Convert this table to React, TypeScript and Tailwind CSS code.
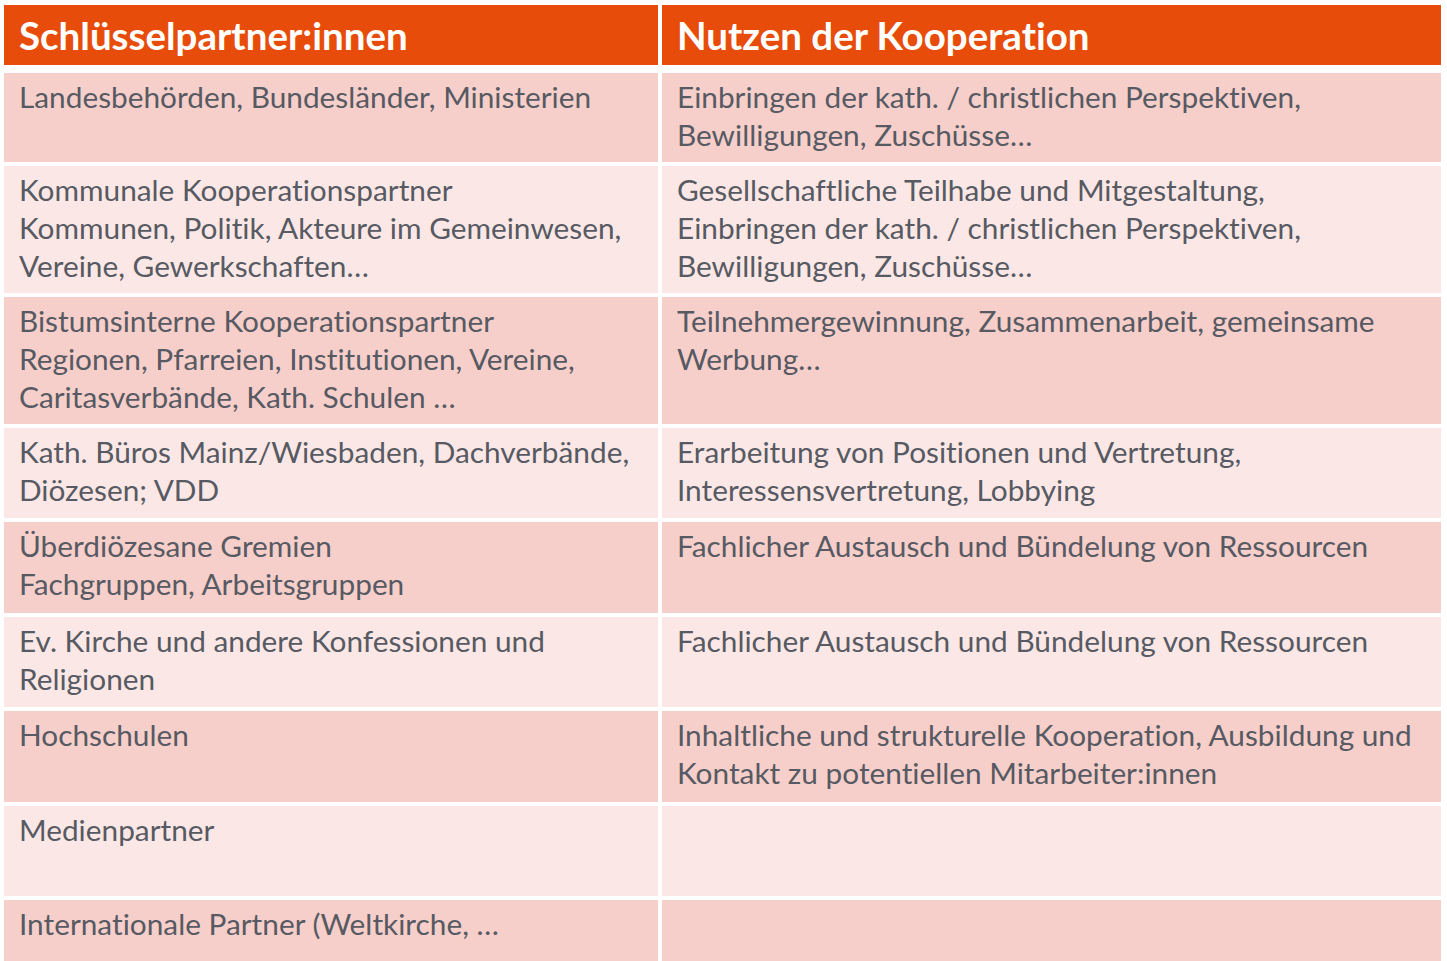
const rows: { h: string; bg: string; left: string[]; right: string[] }[] = [
  {
    h: 'h-[89px]',
    bg: 'bg-[#f6cfcb]',
    left: ['Landesbehörden, Bundesländer, Ministerien'],
    right: ['Einbringen der kath. / christlichen Perspektiven,', 'Bewilligungen, Zuschüsse…'],
  },
  {
    h: 'h-[127px]',
    bg: 'bg-[#fbe8e6]',
    left: ['Kommunale Kooperationspartner', 'Kommunen, Politik, Akteure im Gemeinwesen,', 'Vereine, Gewerkschaften…'],
    right: [
      'Gesellschaftliche Teilhabe und Mitgestaltung,',
      'Einbringen der kath. / christlichen Perspektiven,',
      'Bewilligungen, Zuschüsse…',
    ],
  },
  {
    h: 'h-[127px]',
    bg: 'bg-[#f6cfcb]',
    left: ['Bistumsinterne Kooperationspartner', 'Regionen, Pfarreien, Institutionen, Vereine,', 'Caritasverbände, Kath. Schulen …'],
    right: ['Teilnehmergewinnung, Zusammenarbeit, gemeinsame', 'Werbung…'],
  },
  {
    h: 'h-[90px]',
    bg: 'bg-[#fbe8e6]',
    left: ['Kath. Büros Mainz/Wiesbaden, Dachverbände,', 'Diözesen; VDD'],
    right: ['Erarbeitung von Positionen und Vertretung,', 'Interessensvertretung, Lobbying'],
  },
  {
    h: 'h-[91px]',
    bg: 'bg-[#f6cfcb]',
    left: ['Überdiözesane Gremien', 'Fachgruppen, Arbeitsgruppen'],
    right: ['Fachlicher Austausch und Bündelung von Ressourcen'],
  },
  {
    h: 'h-[90px]',
    bg: 'bg-[#fbe8e6]',
    left: ['Ev. Kirche und andere Konfessionen und', 'Religionen'],
    right: ['Fachlicher Austausch und Bündelung von Ressourcen'],
  },
  {
    h: 'h-[91px]',
    bg: 'bg-[#f6cfcb]',
    left: ['Hochschulen'],
    right: ['Inhaltliche und strukturelle Kooperation, Ausbildung und', 'Kontakt zu potentiellen Mitarbeiter:innen'],
  },
  {
    h: 'h-[90px]',
    bg: 'bg-[#fbe8e6]',
    left: ['Medienpartner'],
    right: [],
  },
  {
    h: 'h-[90px]',
    bg: 'bg-[#f6cfcb]',
    left: ['Internationale Partner (Weltkirche, …'],
    right: [],
  },
]

function Cell({ lines, bg }: { lines: string[]; bg: string }) {
  return (
    <div className={`${bg} pl-[15px] pt-[5px] text-[29.8px] leading-[38px] text-[#575a62] whitespace-nowrap`}>
      {lines.map((l, i) => (
        <div key={i}>{l}</div>
      ))}
    </div>
  )
}

export default function App() {
  return (
    <div className="h-[961px] w-[1447px] overflow-hidden bg-white pl-[4px] pt-[5px] font-['Lato','Liberation_Sans',sans-serif] [font-variant-ligatures:none]">
      <div className="grid h-[60px] grid-cols-[654px_779px] gap-x-[4px]">
        <div className="flex items-center bg-[#e84c0a] pl-[15px] pt-[2px] text-[38.5px] font-bold text-white">Schlüsselpartner:innen</div>
        <div className="flex items-center bg-[#e84c0a] pl-[15px] pt-[2px] text-[38.5px] font-bold text-white">Nutzen der Kooperation</div>
      </div>
      <div className="mt-[8px] flex flex-col gap-y-[4px]">
        {rows.map((r, i) => (
          <div key={i} className={`grid ${r.h} grid-cols-[654px_779px] gap-x-[4px]`}>
            <Cell lines={r.left} bg={r.bg} />
            <Cell lines={r.right} bg={r.bg} />
          </div>
        ))}
      </div>
    </div>
  )
}
